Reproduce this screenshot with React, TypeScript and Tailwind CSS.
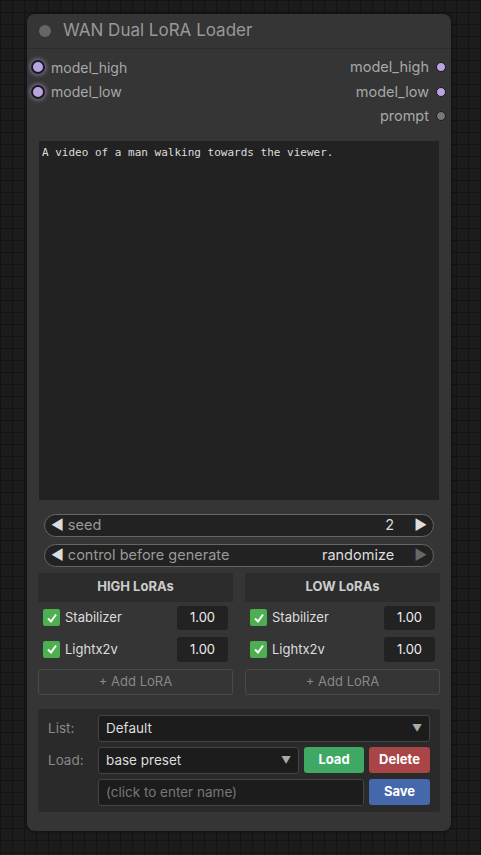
import React from "react";

const font = "font-['Inter','Liberation_Sans',sans-serif]";

function InputSlot({ label }: { label: string }) {
  return (
    <div className="flex h-[24.5px] items-center gap-[6px]">
      <span className="h-[14px] w-[14px] rounded-full border-2 border-[#1a1a1a] bg-[#b9a3e3] shadow-[0_0_4px_1px_rgba(185,163,227,0.6)]" />
      <span className="text-[14px] text-[#a8a8a8]">{label}</span>
    </div>
  );
}

function OutputSlot({ label, color }: { label: string; color: string }) {
  return (
    <div className="flex h-[24.5px] items-center justify-end gap-[7px]">
      <span className="text-[14.5px] text-[#a8a8a8]">{label}</span>
      <span className={`h-[10px] w-[10px] rounded-full border border-[#1a1a1a] ${color}`} />
    </div>
  );
}

function Pill({ label, value, dim }: { label: string; value: string; dim?: boolean }) {
  return (
    <div className="flex h-[23px] items-center rounded-full border border-[#666] bg-[#222] px-[6px] text-[14.5px]">
      <span className="text-[14px] leading-none text-[#ddd]">◀</span>
      <span className="ml-[4px] flex-1 text-[#999]">{label}</span>
      <span className="mr-[20px] text-[#ddd]">{value}</span>
      <span className={`text-[14px] leading-none ${dim ? "text-[#666]" : "text-[#ddd]"}`}>▶</span>
    </div>
  );
}

function Check() {
  return (
    <span className="flex h-[17px] w-[17px] items-center justify-center rounded-[2px] bg-[#4caf50]">
      <svg width="12" height="12" viewBox="0 0 12 12">
        <path d="M2 6.5 L5 9.5 L10 2.5" stroke="#fff" strokeWidth="2" fill="none" />
      </svg>
    </span>
  );
}

function LoraColumn({ title }: { title: string }) {
  const rows = ["Stabilizer", "Lightx2v"];
  return (
    <div className="flex flex-1 flex-col">
      <div className="flex h-[29px] items-center justify-center bg-[#2c2c2c] text-[13px] font-bold text-[#ccc]">
        {title}
      </div>
      <div className="mt-[4px] flex flex-col gap-[7px] px-[5px]">
        {rows.map((r) => (
          <div key={r} className="flex h-[24.5px] items-center">
            <Check />
            <span className="ml-[5px] flex-1 text-[13px] text-[#ddd]">{r}</span>
            <span className="flex h-[24.5px] w-[51px] items-center justify-center rounded-[3px] bg-[#222] text-[13px] text-[#eee]">
              1.00
            </span>
          </div>
        ))}
      </div>
      <div className="mt-[7px] flex h-[26px] items-center justify-center rounded-[3px] border border-[#4a4a4a] text-[13px] text-[#888]">
        + Add LoRA
      </div>
    </div>
  );
}

function Caret() {
  return <span className="text-[10px] text-[#aaa]">▼</span>;
}

export default function App() {
  return (
    <div
      className={`h-[855px] w-[481px] overflow-hidden bg-[#1c1c1c] bg-[linear-gradient(#141414_1px,transparent_1px),linear-gradient(90deg,#141414_1px,transparent_1px)] bg-[size:12px_12px] pl-[27px] pt-[14px] ${font}`}
    >
      <div className="flex w-[424px] flex-col rounded-[8px] bg-[#353535] shadow-[0_0_4px_rgba(0,0,0,0.6)]">
        <div className="flex h-[35px] items-center gap-[12px] border-b border-[#2c2c2c] pl-[12px]">
          <span className="h-[12px] w-[12px] rounded-full bg-[#666]" />
          <span className="text-[17px] text-[#999]">WAN Dual LoRA Loader</span>
        </div>

        <div className="flex px-[4px] pt-[6px]">
          <div className="flex flex-1 flex-col">
            <InputSlot label="model_high" />
            <InputSlot label="model_low" />
          </div>
          <div className="flex flex-col pr-[1px]">
            <OutputSlot label="model_high" color="bg-[#b9a3e3]" />
            <OutputSlot label="model_low" color="bg-[#b9a3e3]" />
            <OutputSlot label="prompt" color="bg-[#777]" />
          </div>
        </div>

        <div className="mx-[12px] mt-[12px] h-[359px] bg-[#222] px-[3px] py-[4px] font-['DejaVu_Sans_Mono',monospace] text-[11px] text-[#ddd]">
          A video of a man walking towards the viewer.
        </div>

        <div className="mx-[17px] mt-[14px] flex flex-col gap-[7px]">
          <Pill label="seed" value="2" />
          <Pill label="control before generate" value="randomize" dim />
        </div>

        <div className="mx-[11px] mt-[6px] flex gap-[12px]">
          <LoraColumn title="HIGH LoRAs" />
          <LoraColumn title="LOW LoRAs" />
        </div>

        <div className="mx-[11px] mb-[19px] mt-[14px] flex flex-col gap-[5px] rounded-[3px] bg-[#2a2a2a] px-[10px] py-[6px] text-[13.5px]">
          <div className="flex items-center">
            <span className="w-[50px] text-[#888]">List:</span>
            <div className="flex h-[27px] flex-1 items-center justify-between rounded-[3px] border border-[#444] bg-[#1c1c1c] px-[7px] text-[#ddd]">
              Default
              <Caret />
            </div>
          </div>
          <div className="flex items-center gap-[5px]">
            <span className="w-[45px] text-[#888]">Load:</span>
            <div className="flex h-[27px] flex-1 items-center justify-between rounded-[3px] border border-[#444] bg-[#1c1c1c] px-[7px] text-[#ddd]">
              base preset
              <Caret />
            </div>
            <div className="flex h-[26px] w-[60px] items-center justify-center rounded-[3px] bg-[#40a865] text-[13px] font-bold text-white">
              Load
            </div>
            <div className="flex h-[26px] w-[61px] items-center justify-center rounded-[3px] bg-[#a94546] text-[13px] font-bold text-white">
              Delete
            </div>
          </div>
          <div className="flex items-center gap-[5px] pl-[50px]">
            <div className="flex h-[27px] flex-1 items-center rounded-[3px] border border-[#444] bg-[#1c1c1c] px-[7px] text-[#777]">
              (click to enter name)
            </div>
            <div className="flex h-[26px] w-[61px] items-center justify-center rounded-[3px] bg-[#4567ab] text-[13px] font-bold text-white">
              Save
            </div>
          </div>
        </div>
      </div>
    </div>
  );
}
